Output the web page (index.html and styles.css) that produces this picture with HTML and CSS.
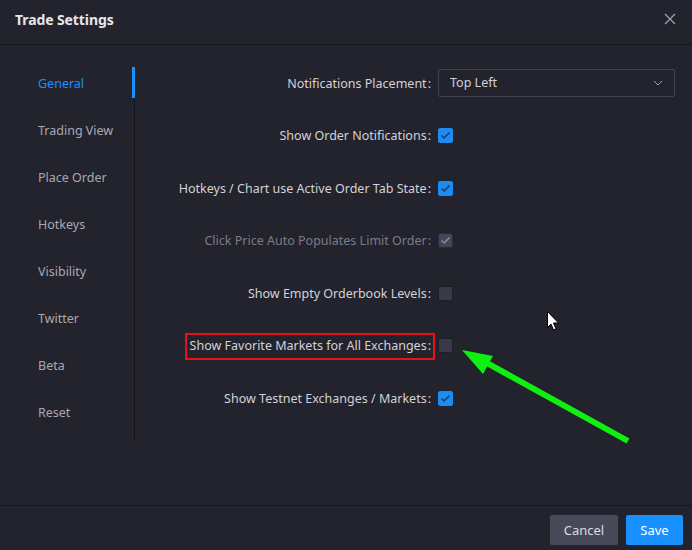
FILE: index.html
```html
<!DOCTYPE html>
<html>
<head>
<meta charset="utf-8">
<link rel="stylesheet" href="styles.css">
</head>
<body>
<div class="dialog">
  <div class="header">
    <div class="title">Trade Settings</div>
    <svg class="close" width="12" height="12" viewBox="0 0 12 12"><path d="M1 1 L11 11 M11 1 L1 11" stroke="#a4a4ae" stroke-width="1.2" fill="none"/></svg>
  </div>
  <div class="body">
    <div class="sidebar">
      <div class="nav active">General</div>
      <div class="nav">Trading View</div>
      <div class="nav">Place Order</div>
      <div class="nav">Hotkeys</div>
      <div class="nav">Visibility</div>
      <div class="nav">Twitter</div>
      <div class="nav">Beta</div>
      <div class="nav">Reset</div>
    </div>
    <div class="content">
      <div class="row">
        <div class="label">Notifications Placement<span class="colon">:</span></div>
        <div class="select">
          <span>Top Left</span>
          <svg width="10" height="6" viewBox="0 0 10 6"><path d="M1 1 L5 5 L9 1" stroke="#a4a4ae" stroke-width="1" fill="none"/></svg>
        </div>
      </div>
      <div class="row">
        <div class="label">Show Order Notifications<span class="colon">:</span></div>
        <div class="cb checked"><svg width="11" height="9" viewBox="0 0 11 9"><path d="M1.5 4.5 L4.2 7 L9.5 1.5" stroke="#26395e" stroke-width="1.6" fill="none"/></svg></div>
      </div>
      <div class="row">
        <div class="label">Hotkeys / Chart use Active Order Tab State<span class="colon">:</span></div>
        <div class="cb checked"><svg width="11" height="9" viewBox="0 0 11 9"><path d="M1.5 4.5 L4.2 7 L9.5 1.5" stroke="#26395e" stroke-width="1.6" fill="none"/></svg></div>
      </div>
      <div class="row">
        <div class="label disabled">Click Price Auto Populates Limit Order<span class="colon">:</span></div>
        <div class="cb dis"><svg width="11" height="9" viewBox="0 0 11 9"><path d="M1.5 4.5 L4.2 7 L9.5 1.5" stroke="#8c8c9c" stroke-width="1.6" fill="none"/></svg></div>
      </div>
      <div class="row">
        <div class="label">Show Empty Orderbook Levels<span class="colon">:</span></div>
        <div class="cb"></div>
      </div>
      <div class="row">
        <div class="label"><span class="mark">Show Favorite Markets for All Exchanges<span class="colon">:</span></span></div>
        <div class="cb"></div>
      </div>
      <div class="row">
        <div class="label">Show Testnet Exchanges / Markets<span class="colon">:</span></div>
        <div class="cb checked"><svg width="11" height="9" viewBox="0 0 11 9"><path d="M1.5 4.5 L4.2 7 L9.5 1.5" stroke="#26395e" stroke-width="1.6" fill="none"/></svg></div>
      </div>
    </div>
  </div>
  <div class="footer">
    <button class="btn cancel">Cancel</button>
    <button class="btn save">Save</button>
  </div>
  <svg class="overlay" width="692" height="550" viewBox="0 0 692 550">
    <line x1="628" y1="441" x2="478" y2="358" stroke="#10f010" stroke-width="6"/>
    <polygon points="462,350 493,356 483,374" fill="#10f010"/>
    <path d="M547.5 311.5 L547.5 327.5 L551 324 L553.5 330 L556 329 L553.5 323 L558.5 323 Z" fill="#ffffff" stroke="#000000" stroke-width="1"/>
  </svg>
</div>
</body>
</html>
```
FILE: styles.css
```css
* { box-sizing: border-box; }
html, body { margin: 0; padding: 0; }
body {
  background: #23232d;
  font-family: "Noto Sans", "Open Sans", sans-serif;
  font-size: 12.5px;
  color: #d2d2d8;
}
.dialog {
  position: relative;
  width: 692px;
  height: 550px;
  display: flex;
  flex-direction: column;
  background: #23232d;
}
.header {
  height: 45px;
  flex: none;
  display: flex;
  align-items: center;
  justify-content: space-between;
  padding: 0 15px 6px 15px;
  border-bottom: 1px solid #16161d;
}
.title {
  font-size: 14px;
  font-weight: bold;
  color: #e6e6ec;
  letter-spacing: -0.1px;
}
.close { margin-right: 1px; }
.body {
  flex: 1;
  display: flex;
  align-items: flex-start;
  padding-top: 22px;
}
.sidebar {
  width: 135px;
  flex: none;
  border-right: 1px solid #15151b;
  display: flex;
  flex-direction: column;
  gap: 16px;
  padding-bottom: 14px;
}
.nav {
  height: 31px;
  line-height: 33px;
  padding-left: 38px;
  color: #a8a8b2;
  margin-right: -1px;
}
.nav.active {
  color: #1890ff;
  border-right: 3px solid #1890ff;
}
.content {
  flex: 1;
  padding-top: 2px;
}
.row {
  height: 28px;
  margin-bottom: 24.6px;
  display: flex;
  align-items: center;
}
.label {
  width: 303px;
  flex: none;
  text-align: right;
  padding-right: 7px;
  color: #d2d2d8;
  white-space: nowrap;
}
.colon { margin-left: 1px; }
.label.disabled { color: #7c7c88; }
.mark {
  outline: 2px solid #e8101a;
  outline-offset: 2px;
  padding: 0 0 2px 1px;
}
.select {
  width: 237px;
  height: 28px;
  margin-top: -1px;
  border: 1px solid #43434f;
  border-radius: 2px;
  display: flex;
  align-items: center;
  justify-content: space-between;
  padding: 0 11px 0 11px;
  color: #d2d2d8;
}
.cb {
  width: 15px;
  height: 15px;
  border-radius: 2px;
  background: #393948;
  border: 1px solid #1e1e27;
  display: flex;
  align-items: center;
  justify-content: center;
}
.cb.checked {
  background: #1b8cf2;
  border-color: #1b8cf2;
}
.cb.dis {
  background: #45455a;
  border-color: #2a2a36;
}
.footer {
  height: 45px;
  flex: none;
  border-top: 1px solid #16161d;
  display: flex;
  justify-content: flex-end;
  align-items: flex-start;
  gap: 8px;
  padding: 9px 9px 0 0;
}
.btn {
  height: 30px;
  border: none;
  border-radius: 2px;
  font-family: inherit;
  font-size: 13px;
  color: #f0f0f4;
  padding: 0;
}
.cancel { width: 68px; background: #484858; color: #dcdce2; }
.save { width: 57px; background: #1890ff; color: #ffffff; }
.overlay {
  position: absolute;
  left: 0;
  top: 0;
  pointer-events: none;
}
```
